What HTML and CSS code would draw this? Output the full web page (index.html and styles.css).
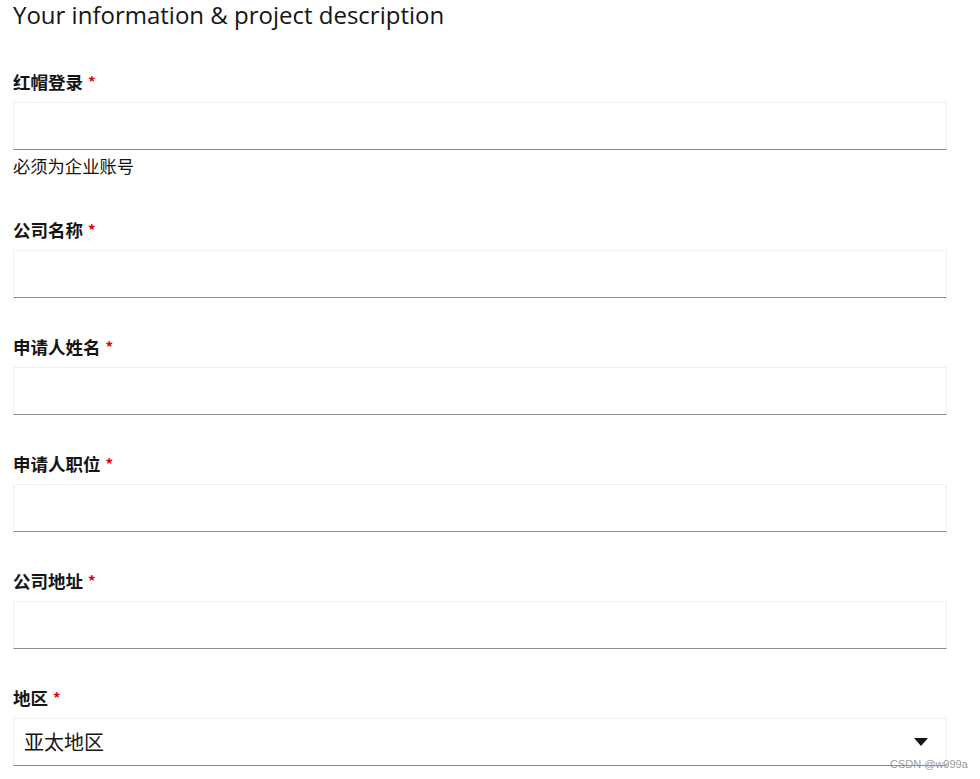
FILE: index.html
```html
<!DOCTYPE html>
<html lang="zh">
<head>
<meta charset="utf-8">
<title>Your information & project description</title>
<link rel="stylesheet" href="styles.css">
</head>
<body>
<main class="page">
  <h2 class="title">Your information &amp; project description</h2>
  <form class="form">
    <div class="group">
      <label class="label">红帽登录 <span class="req">*</span></label>
      <input class="input" type="text">
      <div class="helper">必须为企业账号</div>
    </div>
    <div class="group">
      <label class="label">公司名称 <span class="req">*</span></label>
      <input class="input" type="text">
    </div>
    <div class="group">
      <label class="label">申请人姓名 <span class="req">*</span></label>
      <input class="input" type="text">
    </div>
    <div class="group">
      <label class="label">申请人职位 <span class="req">*</span></label>
      <input class="input" type="text">
    </div>
    <div class="group">
      <label class="label">公司地址 <span class="req">*</span></label>
      <input class="input" type="text">
    </div>
    <div class="group">
      <label class="label">地区 <span class="req">*</span></label>
      <div class="select">
        <span class="select-value">亚太地区</span>
        <svg class="caret" width="14" height="8" viewBox="0 0 14 8"><path d="M0 0 H14 L7 8 Z" fill="#151515"/></svg>
      </div>
    </div>
  </form>
</main>
<div class="watermark">CSDN @w999a</div>
</body>
</html>
```
FILE: styles.css
```css
html, body {
  margin: 0;
  padding: 0;
  background: #fff;
}
body {
  font-family: "Noto Sans", "Noto Sans CJK SC", sans-serif;
  color: #151515;
}
.page {
  padding: 0 33px 0 13px;
}
.title {
  margin: 0;
  font-family: "Open Sans", "Noto Sans CJK SC", sans-serif;
  font-weight: 400;
  font-size: 24px;
  line-height: 30px;
  color: #151515;
}
.form {
  display: flex;
  flex-direction: column;
  margin-top: 40px;
}
.group {
  display: flex;
  flex-direction: column;
  margin-bottom: 37px;
}
.label {
  display: flex;
  align-items: center;
  gap: 5px;
  height: 24px;
  font-family: "Noto Sans CJK SC", sans-serif;
  font-weight: 700;
  font-size: 17.5px;
  line-height: 24px;
  margin-bottom: 8px;
}
.req {
  color: #e00000;
  font-weight: 700;
  font-size: 15px;
  line-height: 24px;
}
.input {
  box-sizing: border-box;
  height: 48px;
  width: 100%;
  margin: 0;
  border: 1px solid #f0f0f0;
  border-bottom-color: #8a8d90;
  background: #fff;
  font-size: 17px;
  outline: none;
}
.helper {
  font-family: "Noto Sans CJK SC", sans-serif;
  font-size: 17.3px;
  line-height: 24px;
  height: 24px;
  margin-top: 4px;
  margin-bottom: 3px;
}
.select {
  box-sizing: border-box;
  height: 48px;
  display: flex;
  align-items: center;
  justify-content: space-between;
  padding: 0 18px 0 10px;
  border: 1px solid #f0f0f0;
  border-bottom-color: #8a8d90;
}
.select-value {
  font-family: "Noto Sans CJK SC", sans-serif;
  font-size: 20px;
  line-height: 24px;
}
.caret {
  display: block;
}
.watermark {
  position: absolute;
  left: 890px;
  top: 758px;
  font-family: "Liberation Sans", sans-serif;
  font-size: 11px;
  color: #9a9a9a;
}
```
